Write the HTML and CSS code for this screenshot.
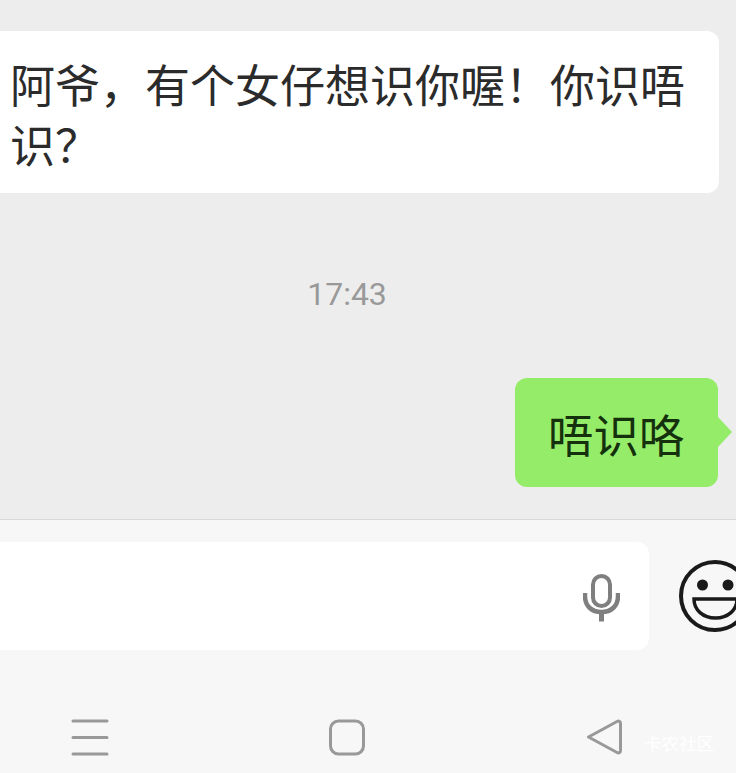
FILE: index.html
```html
<!DOCTYPE html>
<html lang="zh">
<head>
<meta charset="utf-8">
<title>Chat</title>
<link rel="stylesheet" href="styles.css">
</head>
<body>
<div class="screen">
  <main class="chat">
    <div class="bubble-in">阿爷，有个女仔想识你喔！你识唔识？</div>
    <div class="time">17:43</div>
    <div class="row-out">
      <div class="bubble-out">唔识咯</div>
    </div>
  </main>
  <section class="composer">
    <div class="input">
      <svg class="mic" width="37" height="48" viewBox="0 0 37 48" fill="none" stroke="#7f7f7f" stroke-width="4">
        <rect x="10" y="2" width="17" height="30" rx="8.500"/>
        <path d="M2 19v3c0 10 6.500 16 16.500 16s16.500-6 16.500-16v-3" stroke-width="4.500"/>
        <path d="M18.500 38v9.500" stroke-width="5"/>
      </svg>
    </div>
    <svg class="smile" width="72" height="72" viewBox="0 0 72 72" fill="none" stroke="#1a1a1a">
      <circle cx="36" cy="36" r="34" stroke-width="4"/>
      <circle cx="23.500" cy="25" r="5.500" fill="#1a1a1a" stroke="none"/>
      <circle cx="49" cy="25" r="5.500" fill="#1a1a1a" stroke="none"/>
      <path d="M15 39h43c0 11-9 19-21.500 19S15 50 15 39z" stroke-width="3.500"/>
    </svg>
  </section>
  <nav class="navbar">
    <svg class="menu" width="38" height="37" viewBox="0 0 38 37" stroke="#999" stroke-width="3" stroke-linecap="round">
      <path d="M2 2h34M2 18.500h34M2 35h34"/>
    </svg>
    <svg class="home" width="36" height="37" viewBox="0 0 36 37" fill="none" stroke="#999" stroke-width="3">
      <rect x="1.500" y="2" width="33" height="33" rx="8"/>
    </svg>
    <svg class="back" width="36" height="37" viewBox="0 0 36 37" fill="none" stroke="#999" stroke-width="3" stroke-linejoin="round">
      <path d="M1.500 18 30 2.500c1.800-.9 3.500 0 3.500 1.800v27.400c0 1.800-1.700 2.700-3.500 1.800z"/>
    </svg>
    <span class="watermark">卡农社区</span>
  </nav>
</div>
</body>
</html>
```
FILE: styles.css
```css
* { box-sizing: border-box; }
html, body { margin: 0; padding: 0; }
body {
  width: 736px;
  height: 773px;
  overflow: hidden;
  font-family: "Noto Sans CJK SC", "Liberation Sans", sans-serif;
}
.screen {
  display: flex;
  flex-direction: column;
  width: 736px;
  height: 773px;
  overflow: hidden;
  background: #f7f7f7;
}
.chat {
  height: 520px;
  padding-top: 31px;
  background: #ededed;
  border-bottom: 1px solid #d8d8d8;
}
.bubble-in {
  width: 719px;
  height: 162px;
  padding: 23px 28px 0 10px;
  background: #fff;
  border-radius: 0 12px 12px 0;
  color: #2b2b2b;
  font-size: 45px;
  font-weight: 400;
  line-height: 60px;
}
.time {
  margin-top: 84px;
  height: 34px;
  padding-right: 42px;
  text-align: center;
  color: #999;
  font-family: Roboto, sans-serif;
  font-size: 32px;
  line-height: 34px;
}
.row-out {
  display: flex;
  justify-content: flex-end;
  margin-top: 67px;
  padding-right: 18px;
}
.bubble-out {
  position: relative;
  width: 203px;
  height: 109px;
  padding: 0 0 0 33px;
  background: #95ec69;
  border-radius: 12px;
  color: #14300c;
  font-size: 45.500px;
  font-weight: 400;
  line-height: 110px;
}
.bubble-out::after {
  content: "";
  position: absolute;
  right: -14px;
  top: 39px;
  width: 0;
  height: 0;
  border-left: 14px solid #95ec69;
  border-top: 15px solid transparent;
  border-bottom: 15px solid transparent;
}
.composer {
  display: flex;
  align-items: center;
  gap: 30px;
  height: 152px;
  padding-top: 22px;
  padding-bottom: 22px;
}
.input {
  display: flex;
  align-items: center;
  justify-content: flex-end;
  flex: none;
  width: 649px;
  height: 108px;
  padding: 4px 29px 0 0;
  background: #fff;
  border-radius: 0 12px 12px 0;
}
.mic { flex: none; }
.smile { flex: none; }
.navbar {
  position: relative;
  display: flex;
  align-items: flex-start;
  flex: 1;
  padding: 47px 0 0 71px;
}
.menu { flex: none; }
.home { flex: none; margin-left: 220px; }
.back { flex: none; margin-left: 222px; }
.watermark {
  position: absolute;
  left: 644px;
  top: 59px;
  color: #fff;
  font-size: 17.500px;
  line-height: 24px;
}
```
